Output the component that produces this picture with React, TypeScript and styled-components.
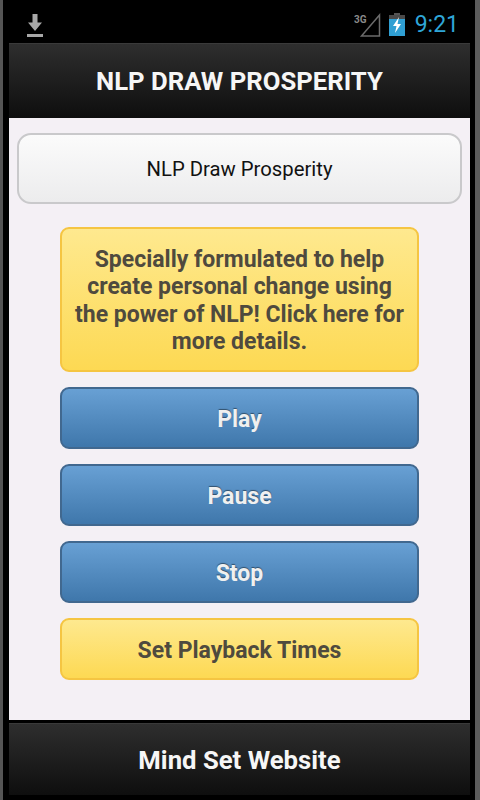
import { createGlobalStyle } from 'styled-components';
import styled from 'styled-components';

const GlobalStyle = createGlobalStyle`
  html, body {
    margin: 0;
    padding: 0;
    background: #000;
    font-family: Roboto, "Liberation Sans", sans-serif;
  }
`;

const Frame = styled.div`
  box-sizing: border-box;
  width: 480px;
  height: 800px;
  display: flex;
  flex-direction: column;
  padding: 0 5px 5px 6px;
  background: #000;
  border-left: 3px solid #555;
  border-right: 5px solid #5c5c5c;
`;

const StatusBar = styled.div`
  box-sizing: border-box;
  height: 43px;
  flex: none;
  display: flex;
  align-items: center;
  justify-content: space-between;
  padding: 6px 11px 0 17px;
`;

const StatusRight = styled.div`
  display: flex;
  align-items: center;
  gap: 8px;
`;

const Clock = styled.span`
  font-size: 23px;
  color: #2fa6d8;
  margin-left: 2px;
`;

const Bar = styled.div<{ $tall?: boolean }>`
  flex: none;
  height: ${({ $tall }) => ($tall ? '75px' : '72px')};
  display: flex;
  align-items: center;
  justify-content: center;
  background: linear-gradient(#2e2e2e, #0e0e0e);
  border-top: 1px solid #3a3a3a;
  box-sizing: border-box;
  color: #f6f6f6;
  font-weight: 700;
  font-size: 25.7px;
`;

const Body = styled.div`
  flex: 1;
  display: flex;
  flex-direction: column;
  align-items: center;
  padding: 15px 8px 0;
  background: #f4f0f5;
  border-bottom: 3px solid #000;
`;

const TitleBox = styled.div`
  box-sizing: border-box;
  width: 100%;
  height: 71px;
  display: flex;
  align-items: center;
  justify-content: center;
  border: 2px solid #c9c9cb;
  border-radius: 14px;
  background: linear-gradient(#fbfbfb, #ececed);
  color: #111;
  font-size: 20.3px;
  margin-bottom: 23px;
`;

const ActionStack = styled.div`
  width: 359px;
  display: flex;
  flex-direction: column;
  gap: 15px;
`;

const ActionButton = styled.div<{ $variant: 'blue' | 'yellow'; $height: number }>`
  box-sizing: border-box;
  height: ${({ $height }) => $height}px;
  display: flex;
  align-items: center;
  justify-content: center;
  text-align: center;
  padding: 4px 12px 0;
  border-radius: 9px;
  font-weight: 700;
  font-size: 23px;
  line-height: 27.5px;
  ${({ $variant }) =>
    $variant === 'blue'
      ? `
    background: linear-gradient(#68a0d4, #3f77ab);
    border: 2px solid #41688f;
    color: #f0f0f0;
    text-shadow: 0 -1px 1px rgba(0, 0, 0, 0.45);
  `
      : `
    background: linear-gradient(#fee98f, #fdd953);
    border: 2px solid #f5c542;
    color: #4f4a3e;
  `}
`;

const DetailsButton = styled(ActionButton)`
  padding-top: 2px;
`;

const DownloadIcon = () => (
  <svg width="18" height="24" viewBox="0 0 18 24">
    <path d="M6.500 1h5v8.500h4.500L9 18 2 9.500h4.500z" fill="#a8a8a8" />
    <rect x="1" y="21" width="16" height="3" fill="#a8a8a8" />
  </svg>
);

const SignalIcon = () => (
  <svg width="27" height="24" viewBox="0 0 27 24">
    <text x="0" y="10" fontSize="10" fontWeight="700" fill="#8a8a8a" fontFamily="Roboto, sans-serif">3G</text>
    <path d="M7.500 23 25.500 2v21z" fill="none" stroke="#6b6b6b" strokeWidth="1.500" />
  </svg>
);

const BatteryIcon = () => (
  <svg width="16" height="23" viewBox="0 0 16 23">
    <rect x="5" y="0" width="6" height="2" fill="#555" />
    <rect x="0" y="2" width="16" height="21" fill="#4a4a4a" />
    <rect x="0" y="6" width="16" height="17" fill="#2f9fd3" />
    <path d="M10 4 4 13h3.500L6 20l6-9H8.500z" fill="#fff" />
  </svg>
);

export default function App() {
  return (
    <>
      <GlobalStyle />
      <Frame>
        <StatusBar>
          <DownloadIcon />
          <StatusRight>
            <SignalIcon />
            <BatteryIcon />
            <Clock>9:21</Clock>
          </StatusRight>
        </StatusBar>
        <Bar $tall>NLP DRAW PROSPERITY</Bar>
        <Body>
          <TitleBox>NLP Draw Prosperity</TitleBox>
          <ActionStack>
            <DetailsButton $variant="yellow" $height={145}>
              Specially formulated to help create personal change using the power of NLP! Click here for more details.
            </DetailsButton>
            <ActionButton $variant="blue" $height={62}>Play</ActionButton>
            <ActionButton $variant="blue" $height={62}>Pause</ActionButton>
            <ActionButton $variant="blue" $height={62}>Stop</ActionButton>
            <ActionButton $variant="yellow" $height={62}>Set Playback Times</ActionButton>
          </ActionStack>
        </Body>
        <Bar>Mind Set Website</Bar>
      </Frame>
    </>
  );
}
